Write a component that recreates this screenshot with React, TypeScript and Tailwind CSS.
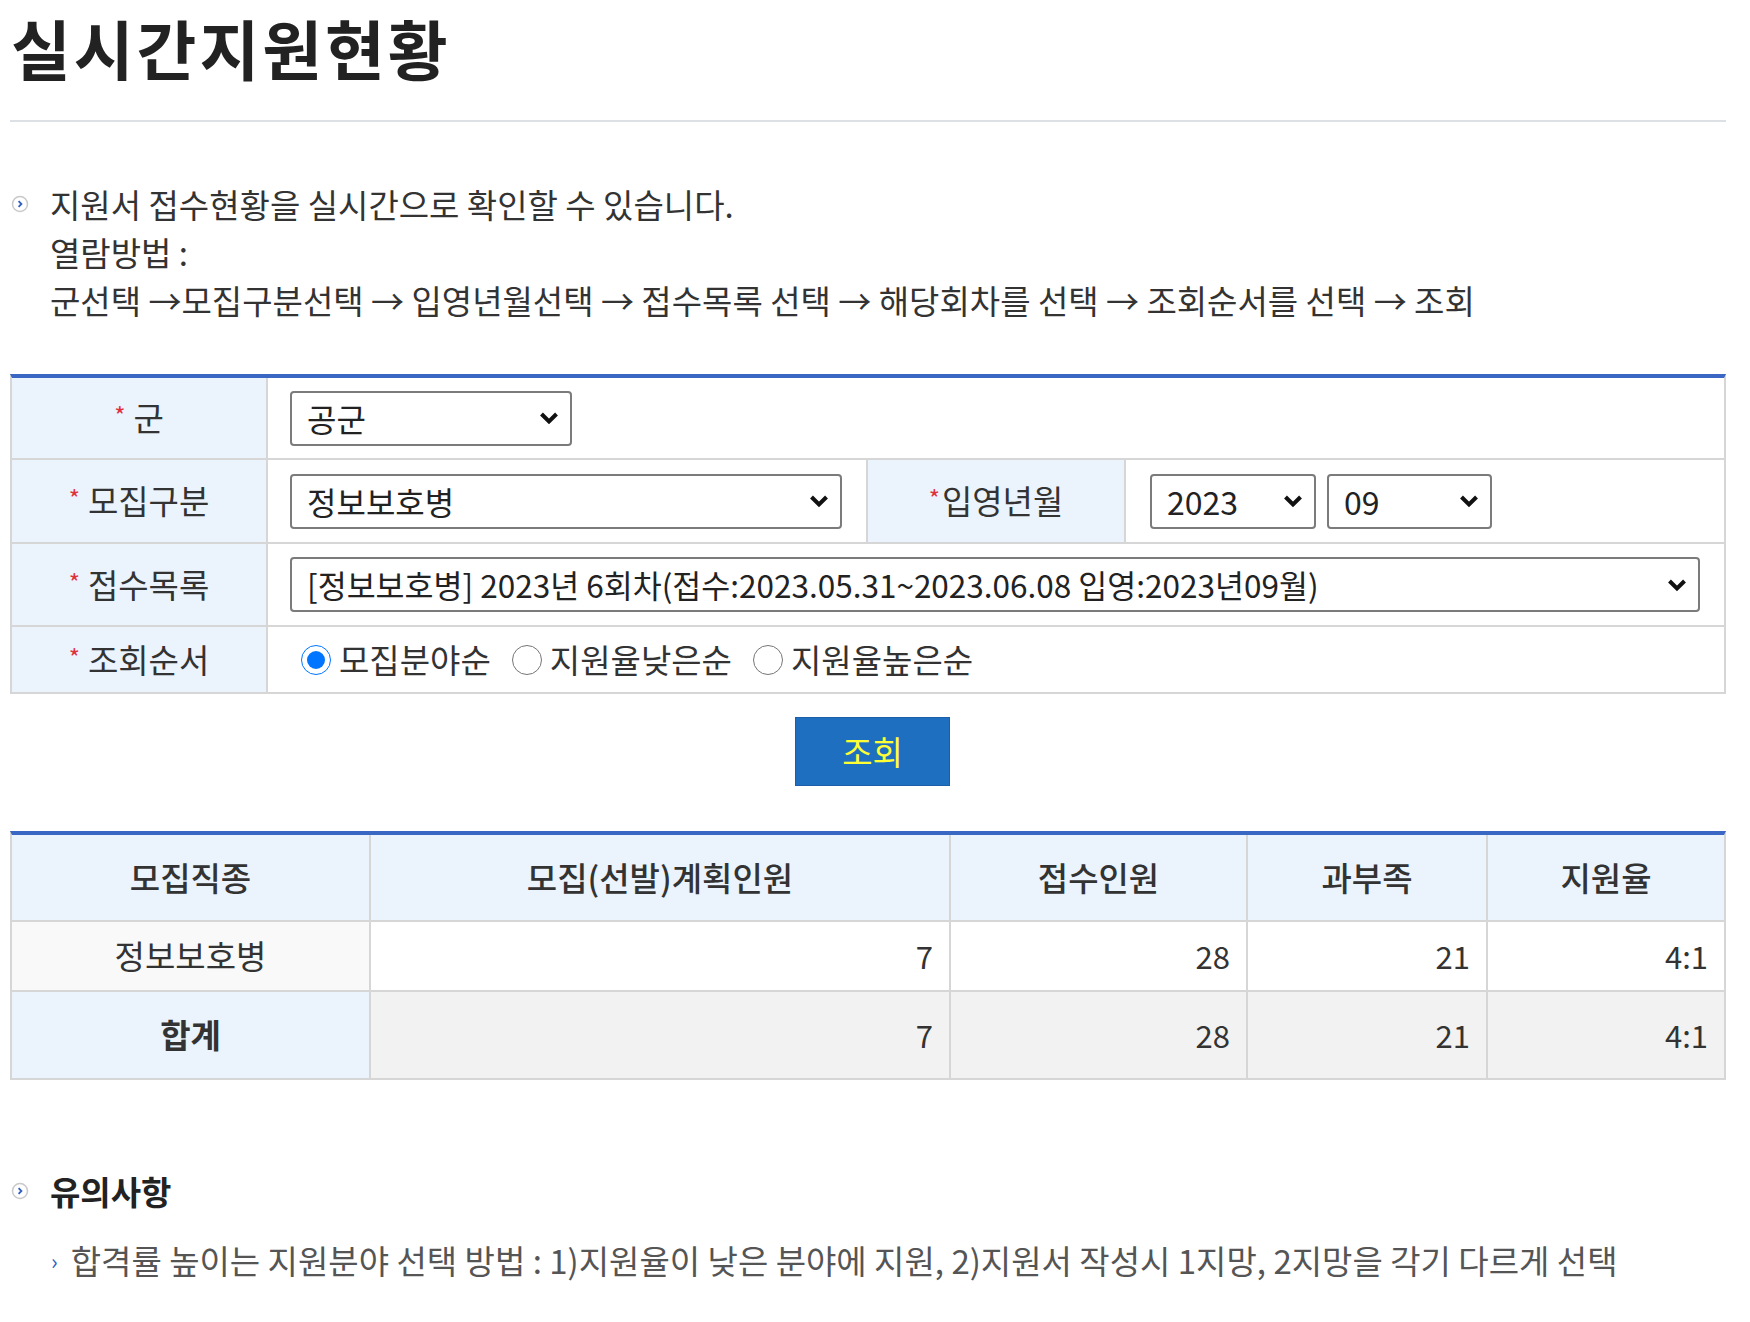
import React from 'react';

const FONT = "font-['Noto_Sans_CJK_KR','Noto_Sans',sans-serif]";

const CircleIcon: React.FC = () => (
  <svg width="18" height="18" viewBox="0 0 18 18" className="shrink-0">
    <circle cx="9" cy="9" r="7.5" fill="#fff" stroke="#c9c9c9" strokeWidth="1.5" />
    <path d="M7.6 6.2 L10.4 9 L7.6 11.8" fill="none" stroke="#2f5fbf" strokeWidth="1.8" />
  </svg>
);

const Chevron: React.FC = () => (
  <svg
    width="20"
    height="13"
    viewBox="0 0 20 13"
    className="absolute right-[13px] top-1/2 -translate-y-1/2 pointer-events-none"
  >
    <path d="M2.5 2.5 L10 10 L17.5 2.5" fill="none" stroke="#111" strokeWidth="4" />
  </svg>
);

interface SelectProps {
  value: string;
  className: string;
  textSize?: string;
}

const Select: React.FC<SelectProps> = ({ value, className, textSize = 'text-[32px]' }) => (
  <div className={`relative h-[55px] ${className}`}>
    <select
      defaultValue={value}
      className={`appearance-none w-full h-full border-2 border-[#7b7b7b] rounded-[4px] bg-white pl-[15px] pr-[40px] ${textSize} text-[#222] outline-none`}
    >
      <option>{value}</option>
    </select>
    <Chevron />
  </div>
);

const Label: React.FC<{ text: string; className?: string; space?: boolean }> = ({ text, className = '', space = true }) => (
  <div className={`flex items-center justify-center bg-[#ebf3fd] text-[33px] text-[#333] ${className}`}>
    <span className={`text-[#e0303a] text-[24px] -mt-[6px] ${space ? 'mr-[8px]' : 'mr-[2px]'}`}>*</span>
    {text}
  </div>
);

const Radio: React.FC<{ label: string; checked?: boolean }> = ({ label, checked }) => (
  <label className="flex items-center mr-[21px]">
    <input
      type="radio"
      name="order"
      defaultChecked={checked}
      className="w-[30px] h-[30px] m-0 mr-[8px]"
    />
    <span>{label}</span>
  </label>
);

const results = [
  { name: '정보보호병', plan: 7, recv: 28, diff: 21, rate: '4:1' },
];

export default function App() {
  return (
    <div className={`w-[1750px] min-h-[1322px] bg-white ${FONT}`}>
      <div className="ml-[10px] w-[1716px]">
        {/* Title */}
        <h1 className="text-[65px] font-bold leading-[94px] tracking-[3px] text-[#222] pl-[1px]">실시간지원현황</h1>
        <div className="h-[2px] bg-[#dde0e5] mt-[26px]" />

        {/* Intro */}
        <div className="mt-[58px] text-[33px] text-[#333] leading-[48px]">
          <div className="flex items-center">
            <span className="ml-[1px] mr-[21px] flex"><CircleIcon /></span>
            지원서 접수현황을 실시간으로 확인할 수 있습니다.
          </div>
          <div className="pl-[40px]">열람방법 :</div>
          <div className="pl-[40px]">
            군선택 →모집구분선택 → 입영년월선택 → 접수목록 선택 → 해당회차를 선택 → 조회순서를 선택 → 조회
          </div>
        </div>

        {/* Search form */}
        <div className="mt-[50px] border-t-4 border-t-[#3a66c4] border-x-2 border-x-[#d6d6d6]">
          <div className="flex h-[82px] border-b-2 border-[#d6d6d6]">
            <Label text="군" className="w-[256px] border-r-2 border-[#d6d6d6]" />
            <div className="flex items-center pl-[22px]">
              <Select value="공군" className="w-[282px]" />
            </div>
          </div>
          <div className="flex h-[84px] border-b-2 border-[#d6d6d6]">
            <Label text="모집구분" className="w-[256px] border-r-2 border-[#d6d6d6]" />
            <div className="flex items-center pl-[22px] w-[598px]">
              <Select value="정보보호병" className="w-[552px]" />
            </div>
            <Label text="입영년월" space={false} className="w-[260px] border-x-2 border-[#d6d6d6]" />
            <div className="flex items-center gap-[11px] pl-[24px]">
              <Select value="2023" className="w-[166px]" />
              <Select value="09" className="w-[165px]" />
            </div>
          </div>
          <div className="flex h-[83px] border-b-2 border-[#d6d6d6]">
            <Label text="접수목록" className="w-[256px] border-r-2 border-[#d6d6d6]" />
            <div className="flex flex-1 items-center pl-[22px] pr-[24px]">
              <Select
                value="[정보보호병] 2023년 6회차(접수:2023.05.31~2023.06.08 입영:2023년09월)"
                className="w-full"
                textSize="text-[31.5px]"
              />
            </div>
          </div>
          <div className="flex h-[67px] border-b-2 border-[#d6d6d6]">
            <Label text="조회순서" className="w-[256px] border-r-2 border-[#d6d6d6]" />
            <div className="flex items-center pl-[33px] text-[33px] text-[#333]">
              <Radio label="모집분야순" checked />
              <Radio label="지원율낮은순" />
              <Radio label="지원율높은순" />
            </div>
          </div>
        </div>

        <button
          type="button"
          className="block ml-[785px] mt-[23px] w-[155px] h-[69px] bg-[#1f6fc1] border border-[#1a5fa8] text-[#ffff33] text-[33px]"
        >
          조회
        </button>

        {/* Results */}
        <div className="mt-[45px] border-t-4 border-t-[#3a66c4] border-x-2 border-x-[#d6d6d6] text-[31px] text-[#333]">
          <div className="flex h-[87px] border-b-2 border-[#d6d6d6] bg-[#ebf3fd] font-medium text-[33px]">
            <div className="w-[359px] border-r-2 border-[#d6d6d6] flex items-center justify-center">모집직종</div>
            <div className="w-[580px] border-r-2 border-[#d6d6d6] flex items-center justify-center">모집(선발)계획인원</div>
            <div className="w-[297px] border-r-2 border-[#d6d6d6] flex items-center justify-center">접수인원</div>
            <div className="w-[240px] border-r-2 border-[#d6d6d6] flex items-center justify-center">과부족</div>
            <div className="flex-1 flex items-center justify-center">지원율</div>
          </div>
          {results.map((r) => (
            <div key={r.name} className="flex h-[70px] border-b-2 border-[#d6d6d6]">
              <div className="w-[359px] border-r-2 border-[#d6d6d6] bg-[#f9f9f9] flex items-center justify-center text-[33px]">{r.name}</div>
              <div className="w-[580px] border-r-2 border-[#d6d6d6] flex items-center justify-end pr-[16px]">{r.plan}</div>
              <div className="w-[297px] border-r-2 border-[#d6d6d6] flex items-center justify-end pr-[16px]">{r.recv}</div>
              <div className="w-[240px] border-r-2 border-[#d6d6d6] flex items-center justify-end pr-[16px]">{r.diff}</div>
              <div className="flex-1 flex items-center justify-end pr-[16px]">{r.rate}</div>
            </div>
          ))}
          <div className="flex h-[88px] border-b-2 border-[#d6d6d6]">
            <div className="w-[359px] border-r-2 border-[#d6d6d6] bg-[#ebf3fd] font-bold text-[33px] flex items-center justify-center">합계</div>
            <div className="w-[580px] border-r-2 border-[#d6d6d6] bg-[#f2f2f2] flex items-center justify-end pr-[16px]">7</div>
            <div className="w-[297px] border-r-2 border-[#d6d6d6] bg-[#f2f2f2] flex items-center justify-end pr-[16px]">28</div>
            <div className="w-[240px] border-r-2 border-[#d6d6d6] bg-[#f2f2f2] flex items-center justify-end pr-[16px]">21</div>
            <div className="flex-1 bg-[#f2f2f2] flex items-center justify-end pr-[16px]">4:1</div>
          </div>
        </div>

        {/* Notice */}
        <div className="mt-[87px] flex items-center text-[33px] leading-[48px] font-bold text-[#222]">
          <span className="ml-[1px] mr-[21px] flex"><CircleIcon /></span>
          유의사항
        </div>
        <div className="mt-[21px] flex items-center text-[33px] leading-[48px] text-[#555]">
          <span className="ml-[41px] mr-[13px] text-[#2f5fbf] text-[22px]">›</span>
          합격률 높이는 지원분야 선택 방법 : 1)지원율이 낮은 분야에 지원, 2)지원서 작성시 1지망, 2지망을 각기 다르게 선택
        </div>
      </div>
    </div>
  );
}
